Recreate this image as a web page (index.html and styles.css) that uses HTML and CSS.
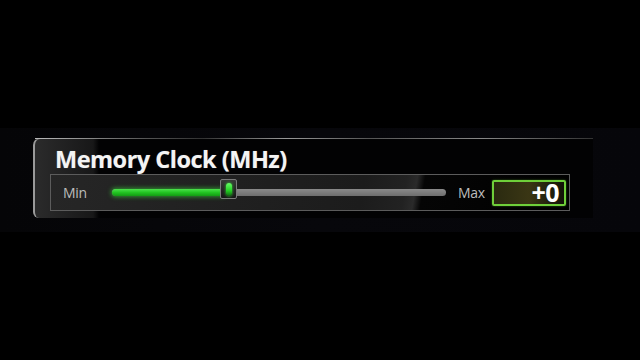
FILE: index.html
```html
<!DOCTYPE html>
<html>
<head>
<meta charset="utf-8">
<link rel="stylesheet" href="styles.css">
</head>
<body>
<div class="band">
  <div class="panel">
    <div class="title">Memory Clock (MHz)</div>
    <div class="control">
      <span class="lbl lbl-min">Min</span>
      <div class="track">
        <div class="fill" style="width:112px"></div>
        <div class="thumb" style="left:108px"><span class="pip"></span></div>
      </div>
      <span class="lbl lbl-max">Max</span>
      <div class="value">+0</div>
    </div>
  </div>
</div>
</body>
</html>
```
FILE: styles.css
```css
html, body {
  margin: 0;
  padding: 0;
  background: #000;
  width: 640px;
  height: 360px;
  overflow: hidden;
  font-family: "Open Sans", "Liberation Sans", sans-serif;
}
.band {
  margin-top: 128px;
  height: 104px;
  padding-top: 10px;
  box-sizing: border-box;
  background: linear-gradient(90deg, #050507 0%, #07070b 50%, #06060a 100%);
}
.panel {
  margin-left: 33px;
  width: 560px;
  height: 80px;
  box-sizing: border-box;
  border-top: 1px solid #7a7a7a;
  border-left: 2px solid #9a9a9a;
  border-radius: 7px 0 0 6px;
  background:
    linear-gradient(90deg, rgba(70,70,70,0.6) 0px, rgba(45,45,45,0.5) 58px, rgba(0,0,0,0) 64px),
    #020203;
  position: relative;
}
.panel::after {
  content: "";
  position: absolute;
  top: -1px;
  left: 0;
  right: 0;
  height: 1px;
  background: linear-gradient(90deg, #bbb 0%, #555 20%, #333 30%, #999 45%, #555 60%, #888 80%, #333 100%);
}
.title {
  padding-left: 20px;
  height: 35px;
  line-height: 41px;
  color: #f4f4f4;
  font-weight: 700;
  font-size: 23.5px;
  letter-spacing: -0.5px;
  text-shadow: 0 0 1px rgba(255,255,255,0.35);
}
.control {
  margin-left: 15px;
  width: 520px;
  height: 37px;
  box-sizing: border-box;
  border: 1px solid #5c5c5c;
  display: flex;
  align-items: center;
  padding-left: 12px;
  background: linear-gradient(100deg, #262626 0%, #1c1c1c 60%, #222 68%, #2a2a2a 70%, #050505 71.5%, #000 100%);
}
.lbl {
  color: #bcbcbc;
  font-size: 14px;
  letter-spacing: -0.3px;
}
.lbl-min {
  width: 49px;
}
.track {
  position: relative;
  width: 334px;
  height: 7px;
  border-radius: 4px;
  background: linear-gradient(180deg, #8a8a8a, #6e6e6e);
}
.fill {
  height: 7px;
  border-radius: 4px 0 0 4px;
  background: linear-gradient(180deg, #4be24b 0%, #22c422 50%, #139a13 100%);
  box-shadow: 0 0 4px 1px rgba(60,220,60,0.6);
}
.thumb {
  position: absolute;
  top: -10px;
  width: 17px;
  height: 20px;
  box-sizing: border-box;
  border: 1px solid #7a7a7a;
  border-radius: 2px;
  background: linear-gradient(180deg, #3a3a3a, #151515);
  display: flex;
  align-items: center;
  justify-content: center;
}
.pip {
  width: 6px;
  height: 13px;
  border-radius: 3px;
  background: linear-gradient(180deg, #6f6 0%, #2c2 60%, #161 100%);
  box-shadow: 0 0 3px #3d3;
}
.lbl-max {
  margin-left: 12px;
  width: 34px;
}
.value {
  width: 74px;
  height: 26px;
  box-sizing: border-box;
  border: 2px solid #6fcf3a;
  border-radius: 2px;
  background: linear-gradient(90deg, #2a2a10 0%, #3a3614 50%, #121208 100%);
  box-shadow: 0 0 2px rgba(110,220,60,0.5);
  color: #fff;
  font-weight: 700;
  font-size: 25px;
  line-height: 21px;
  text-align: right;
  padding-right: 5px;
  letter-spacing: -0.5px;
}
```
